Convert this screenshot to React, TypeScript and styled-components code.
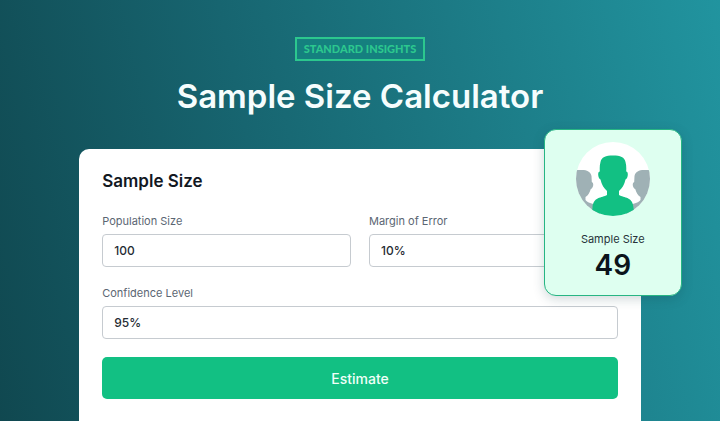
import React, { useState } from "react";
import styled, { createGlobalStyle } from "styled-components";

const GlobalStyle = createGlobalStyle`
  *, *::before, *::after { box-sizing: border-box; }
  body {
    margin: 0;
    font-family: Inter, "Open Sans", sans-serif;
    color: #12181f;
  }
`;

const Page = styled.main`
  display: flex;
  flex-direction: column;
  align-items: center;
  min-height: 100vh;
  padding-top: 37px;
  background: linear-gradient(78deg, #104850 0%, #176570 38%, #1c7a85 66%, #21949f 100%);
`;

const Badge = styled.p`
  margin: 0;
  padding: 0 7px;
  border: 2px solid #2cc78e;
  color: #2cc78e;
  background: #15807f;
  font-family: Lato, sans-serif;
  font-size: 11px;
  font-weight: 900;
  line-height: 20px;
  text-transform: uppercase;
`;

const Title = styled.h1`
  margin: 12px 0 30px;
  color: #f6fdfd;
  font-size: 33px;
  font-weight: 600;
  line-height: 46px;
  white-space: nowrap;
`;

const Panel = styled.section`
  position: relative;
  flex: 1;
  width: 78%;
  padding: 20px 23px 22px;
  border-radius: 10px 10px 0 0;
  background: #fff;
`;

const PanelTitle = styled.h2`
  margin: 0 0 20px;
  font-size: 17px;
  font-weight: 600;
  line-height: 24px;
`;

const Form = styled.form`
  display: grid;
  grid-template-columns: 1fr 1fr;
  gap: 18px;
`;

const Field = styled.div<{ $wide?: boolean }>`
  display: flex;
  flex-direction: column;
  gap: 4px;
  min-width: 0;
  grid-column: ${(p) => (p.$wide ? "1 / -1" : "auto")};
`;

const Label = styled.label`
  color: #5b6673;
  font-size: 11px;
  line-height: 17px;
`;

const Input = styled.input`
  width: 100%;
  height: 33px;
  padding: 0 11px;
  border: 1px solid #c6cbd0;
  border-radius: 4px;
  background: #fff;
  color: #252b33;
  font: 500 12px Inter, "Open Sans", sans-serif;
`;

const Submit = styled.button`
  grid-column: 1 / -1;
  height: 42px;
  border: 0;
  border-radius: 5px;
  background: #12c083;
  color: #f0fff8;
  font: 500 14px Inter, "Open Sans", sans-serif;
`;

const ResultCard = styled.aside`
  position: absolute;
  top: -20px;
  right: -41px;
  display: flex;
  flex-direction: column;
  align-items: center;
  width: 138px;
  padding: 12px 12px 13px;
  border: 1px solid #27b583;
  border-radius: 12px;
  background: #defff0;
  box-shadow: 0 3px 12px rgba(15, 60, 65, 0.2);
`;

const Avatar = styled.svg`
  display: block;
  width: 74px;
  height: 74px;
  margin-bottom: 14px;
`;

const ResultLabel = styled.span`
  color: #27333b;
  font-size: 11px;
  line-height: 18px;
`;

const ResultValue = styled.output`
  color: #0b141b;
  font-size: 28px;
  font-weight: 600;
  line-height: 34px;
`;

function PeopleIcon() {
  return (
    <Avatar viewBox="0 0 74 74" aria-hidden="true">
      <defs>
        <clipPath id="avatar-circle">
          <circle cx="37" cy="37" r="37" />
        </clipPath>
      </defs>
      <g clipPath="url(#avatar-circle)">
        <rect width="74" height="74" fill="#fff" />
        <g fill="#9fb1b5">
          <path id="side-person" d="M-6 30 C-4 28 0 28 4 28 C10 27.500 14.500 29 15.500 34 L15.800 40 C18.300 41 17.300 46 14.800 47 C13.500 51 12 53.500 9.500 55 L9.500 58 C11 60.500 15 61 20 63 L26 76 L-10 76 Z" />
          <use href="#side-person" transform="translate(74 0) scale(-1 1)" />
        </g>
        <path
          fill="#12c083"
          d="M24.500 20 C25.500 15 29.500 13.500 37 13.500 C44.500 13.500 48.500 15 49.500 20 C50.500 23.500 50.300 26.500 50.200 29.500 C52.600 29.500 52.300 36 49.500 37.500 C48.500 42.500 46 46.500 43 49 L43 53 C48 56 57 54.500 57.500 66 L59 76 L15 76 L16.500 66 C17 54.500 26 56 31 53 L31 49 C28 46.500 25.500 42.500 24.500 37.500 C21.700 36 21.400 29.500 23.800 29.500 C23.700 26.500 23.500 23.500 24.500 20 Z"
        />
      </g>
    </Avatar>
  );
}

type TextFieldProps = { id: string; label: string; initial: string; wide?: boolean };

function TextField({ id, label, initial, wide }: TextFieldProps) {
  const [value, setValue] = useState(initial);
  return (
    <Field $wide={wide}>
      <Label htmlFor={id}>{label}</Label>
      <Input id={id} value={value} onChange={(e) => setValue(e.target.value)} />
    </Field>
  );
}

export default function App() {
  return (
    <>
      <GlobalStyle />
      <Page>
        <Badge>Standard Insights</Badge>
        <Title>Sample Size Calculator</Title>
        <Panel>
          <PanelTitle>Sample Size</PanelTitle>
          <Form onSubmit={(e) => e.preventDefault()}>
            <TextField id="population" label="Population Size" initial="100" />
            <TextField id="margin" label="Margin of Error" initial="10%" />
            <TextField id="confidence" label="Confidence Level" initial="95%" wide />
            <Submit type="submit">Estimate</Submit>
          </Form>
          <ResultCard>
            <PeopleIcon />
            <ResultLabel id="result-label">Sample Size</ResultLabel>
            <ResultValue aria-labelledby="result-label">49</ResultValue>
          </ResultCard>
        </Panel>
      </Page>
    </>
  );
}
